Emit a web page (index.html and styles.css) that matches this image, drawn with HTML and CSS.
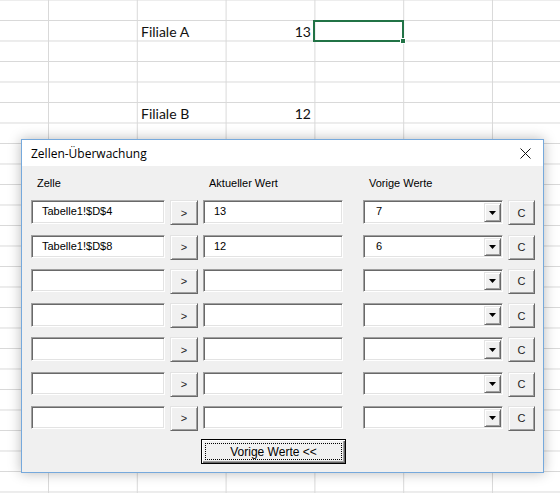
FILE: index.html
```html
<!DOCTYPE html>
<html lang="de">
<head>
<meta charset="utf-8">
<title>Zellen-Überwachung</title>
<link rel="stylesheet" href="styles.css">
</head>
<body>
<div class="sheet">
  <div class="cell c3 r2">Filiale A</div>
  <div class="cell c4 r2 num">13</div>
  <div class="cell c5 r2 sel"><span class="handle"></span></div>
  <div class="cell c3 r6">Filiale B</div>
  <div class="cell c4 r6 num">12</div>
</div>

<div class="dialog">
  <div class="titlebar">
    <span class="title">Zellen-Überwachung</span>
    <svg class="close" width="11" height="11" viewBox="0 0 11 11"><path d="M0.5 0.5 L10.5 10.5 M10.5 0.5 L0.5 10.5" stroke="#111" stroke-width="1" fill="none"/></svg>
  </div>
  <div class="body">
    <div class="grid">
      <div class="lbl">Zelle</div>
      <div></div>
      <div class="lbl">Aktueller Wert</div>
      <div class="lbl lbl-combo">Vorige Werte</div>
      <div></div>

      <div class="field">Tabelle1!$D$4</div>
      <div class="btn">&gt;</div>
      <div class="field">13</div>
      <div class="combo"><span class="val">7</span><span class="arrow"><svg width="7" height="4" viewBox="0 0 7 4"><polygon points="0,0 7,0 3.5,4" fill="#000"/></svg></span></div>
      <div class="btn">C</div>

      <div class="field">Tabelle1!$D$8</div>
      <div class="btn">&gt;</div>
      <div class="field">12</div>
      <div class="combo"><span class="val">6</span><span class="arrow"><svg width="7" height="4" viewBox="0 0 7 4"><polygon points="0,0 7,0 3.5,4" fill="#000"/></svg></span></div>
      <div class="btn">C</div>

      <div class="field"></div>
      <div class="btn">&gt;</div>
      <div class="field"></div>
      <div class="combo"><span class="val"></span><span class="arrow"><svg width="7" height="4" viewBox="0 0 7 4"><polygon points="0,0 7,0 3.5,4" fill="#000"/></svg></span></div>
      <div class="btn">C</div>

      <div class="field"></div>
      <div class="btn">&gt;</div>
      <div class="field"></div>
      <div class="combo"><span class="val"></span><span class="arrow"><svg width="7" height="4" viewBox="0 0 7 4"><polygon points="0,0 7,0 3.5,4" fill="#000"/></svg></span></div>
      <div class="btn">C</div>

      <div class="field"></div>
      <div class="btn">&gt;</div>
      <div class="field"></div>
      <div class="combo"><span class="val"></span><span class="arrow"><svg width="7" height="4" viewBox="0 0 7 4"><polygon points="0,0 7,0 3.5,4" fill="#000"/></svg></span></div>
      <div class="btn">C</div>

      <div class="field"></div>
      <div class="btn">&gt;</div>
      <div class="field"></div>
      <div class="combo"><span class="val"></span><span class="arrow"><svg width="7" height="4" viewBox="0 0 7 4"><polygon points="0,0 7,0 3.5,4" fill="#000"/></svg></span></div>
      <div class="btn">C</div>

      <div class="field"></div>
      <div class="btn">&gt;</div>
      <div class="field"></div>
      <div class="combo"><span class="val"></span><span class="arrow"><svg width="7" height="4" viewBox="0 0 7 4"><polygon points="0,0 7,0 3.5,4" fill="#000"/></svg></span></div>
      <div class="btn">C</div>
    </div>
    <button class="toggle" type="button"><span class="focus">Vorige Werte &lt;&lt;</span></button>
  </div>
</div>
</body>
</html>
```

FILE: styles.css
```css
* { box-sizing: border-box; }

body {
  margin: 0;
  width: 560px;
  height: 493px;
  overflow: hidden;
  position: relative;
  background: #fff;
}

/* ---------- spreadsheet ---------- */
.sheet {
  display: grid;
  grid-template-columns: 48px 89px 89px 88px 89px 89px 1fr;
  grid-template-rows: repeat(24, 20.5px);
  height: 493px;
  background-color: #fff;
  background-image:
    linear-gradient(to right, #d9d9d9 1px, transparent 1px),
    linear-gradient(to bottom, #d9d9d9 1px, transparent 1px);
  background-size: 88.8px 100%, 100% 20.5px;
  background-position: 48px 0, 0 20px;
  font-family: "Lato", "Liberation Sans", sans-serif;
  font-size: 14px;
  color: #111;
}

.cell {
  display: flex;
  align-items: center;
  padding: 2px 4px 0 4px;
  white-space: nowrap;
}
.num { justify-content: flex-end; padding-right: 3px; }
.c3 { grid-column: 3; }
.c4 { grid-column: 4; }
.c5 { grid-column: 5; }
.r2 { grid-row: 2; }
.r6 { grid-row: 6; }

.sel {
  position: relative;
  margin: -1px -1px -1px -1px;
  border: 2px solid #217346;
}
.handle {
  position: absolute;
  right: -4px;
  bottom: -4px;
  width: 6px;
  height: 6px;
  background: #217346;
  border: 1px solid #fff;
}

/* ---------- dialog ---------- */
.dialog {
  position: absolute;
  left: 21px;
  top: 139px;
  width: 523px;
  height: 334px;
  border: 1px solid #76a9dc;
  background: #f0f0f0;
  box-shadow: 0 0 12px rgba(0, 0, 0, 0.28);
  font-family: "Liberation Sans", Arial, sans-serif;
  font-size: 11px;
  color: #000;
}

.titlebar {
  height: 26px;
  background: #fff;
  display: flex;
  align-items: center;
  justify-content: space-between;
  padding: 0 12px 0 9px;
}
.title {
  font-family: "Segoe UI", "Open Sans", sans-serif;
  font-size: 12px;
  color: #000;
}
.close { display: block; }

.body {
  padding: 10.5px 0 0 9px;
}

.grid {
  display: grid;
  grid-template-columns: 134px 28px 140px 155px 27px;
  grid-template-rows: 13px repeat(7, 23.5px);
  column-gap: 5px;
  row-gap: 10.75px;
}

.lbl {
  padding-left: 6px;
  line-height: 13px;
  white-space: nowrap;
}
.lbl-combo { padding-left: 21px; }

.field {
  background: #fff;
  border: 1px solid;
  border-color: #a0a0a0 #fff #fff #a0a0a0;
  box-shadow: inset 1px 1px 0 #696969, inset -1px -1px 0 #e3e3e3;
  padding-left: 10px;
  line-height: 21px;
  white-space: nowrap;
}

.btn {
  height: 25px;
  background: #f0f0f0;
  border: 1px solid;
  border-color: #e3e3e3 #696969 #696969 #e3e3e3;
  box-shadow: inset 1px 1px 0 #fff, inset -1px -1px 0 #a0a0a0;
  display: flex;
  align-items: center;
  justify-content: center;
  font-size: 11px;
  color: #222;
}

.combo {
  justify-self: end;
  width: 140px;
  display: flex;
  background: #fff;
  border: 1px solid;
  border-color: #a0a0a0 #fff #fff #a0a0a0;
  box-shadow: inset 1px 1px 0 #696969, inset -1px -1px 0 #e3e3e3;
}
.val {
  flex: 1;
  padding-left: 12px;
  line-height: 21px;
}
.arrow {
  width: 17px;
  margin: 2px 1px 1px 0;
  background: #f0f0f0;
  border: 1px solid;
  border-color: #e3e3e3 #696969 #696969 #e3e3e3;
  box-shadow: inset 1px 1px 0 #fff, inset -1px -1px 0 #a0a0a0;
  display: flex;
  align-items: center;
  justify-content: center;
}
.arrow svg { display: block; }

.toggle {
  display: block;
  appearance: none;
  margin: 10px 0 0 170px;
  width: 145px;
  height: 25px;
  padding: 3px;
  border: 1px solid #000;
  background: #f0f0f0;
  box-shadow: inset 1px 1px 0 #fff, inset -1px -1px 0 #696969, inset -2px -2px 0 #a0a0a0;
  font-family: "Liberation Sans", Arial, sans-serif;
  font-size: 12px;
  color: #000;
}
.focus {
  display: flex;
  height: 100%;
  align-items: center;
  justify-content: center;
  border: 1px dotted #000;
}
```
